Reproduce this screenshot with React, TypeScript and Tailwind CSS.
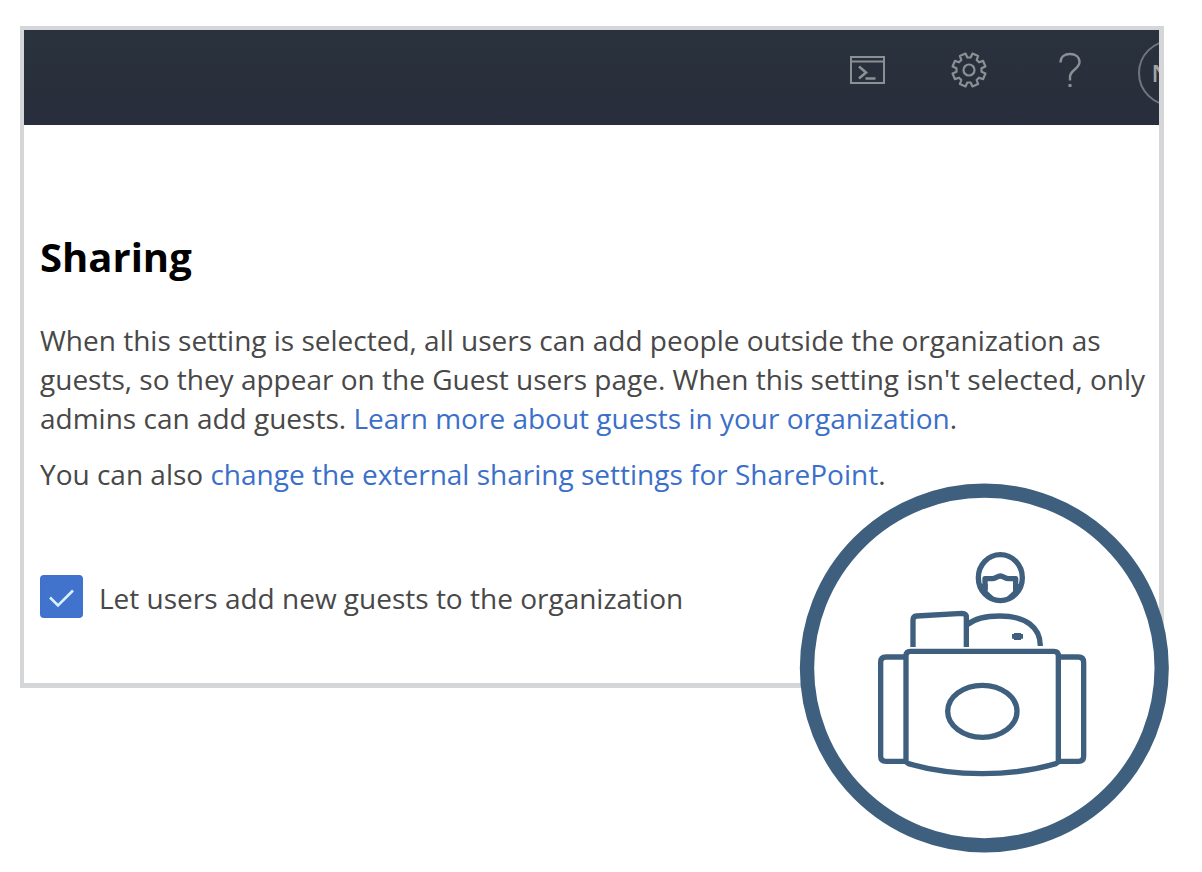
import { useState } from "react";

function TerminalIcon() {
  return (
    <svg viewBox="0 0 35 28" className="h-7 w-[35px]" fill="none" stroke="currentColor" strokeWidth="2" aria-hidden="true">
      <path d="M1 1h33v26H1zM1 5.500h33" />
      <path d="M9 10.500l7 6-7 6M15.500 22.500h10" strokeWidth="2.600" />
    </svg>
  );
}

function toothedOutline() {
  const points: string[] = [];
  const teeth = 8;
  for (let i = 0; i < teeth; i++) {
    const mid = (i / teeth) * 360 - 67.5;
    const corners: [number, number][] = [
      [-15, 12.6],
      [-10.5, 16.8],
      [10.5, 16.8],
      [15, 12.6],
    ];
    for (const [offset, radius] of corners) {
      const angle = ((mid + offset) * Math.PI) / 180;
      points.push(`${(18 + radius * Math.cos(angle)).toFixed(2)},${(18 + radius * Math.sin(angle)).toFixed(2)}`);
    }
  }
  return points.join(" ");
}

function GearIcon() {
  return (
    <svg viewBox="0 0 36 36" className="size-9" fill="none" stroke="currentColor" strokeWidth="2.200" strokeLinejoin="round" aria-hidden="true">
      <polygon points={toothedOutline()} />
      <circle cx="18" cy="18" r="5.500" />
    </svg>
  );
}

function HelpIcon() {
  return (
    <svg viewBox="0 0 22 36" className="h-9 w-[22px]" fill="none" stroke="currentColor" strokeWidth="2.400" aria-hidden="true">
      <path d="M1.500 10.500C1.500 5 5.500 2 11 2s9.500 3 9.500 8c0 7-9.500 8-9.500 15v3.500" />
      <path d="M11 32v3" strokeWidth="3" />
    </svg>
  );
}

function ReceptionBadge() {
  return (
    <svg viewBox="27 39 1110 1110" className="size-[370px]" fill="none" stroke="#3f5f7f" strokeWidth="16" aria-hidden="true">
      <circle cx="583" cy="594" r="532" fill="#fff" strokeWidth="43" />
      <ellipse cx="631" cy="323" rx="66" ry="69" />
      <path d="M585 360V326h22c9 0 15-8 24-8s15 8 24 8h22v34" strokeLinejoin="round" />
      <path d="M568 342h25v22l22 20-9 8-30-26zM694 342h-25v22l-22 20 9 8 30-26z" fill="#3f5f7f" stroke="none" />
      <path d="M369 531V450q0-11 11-12l136-8q13 0 13 12v89" />
      <path d="M532 464c22-18 54-26 97-26 76 0 122 32 122 90" />
      <path d="M672 489h21v3h6v14h-6v4h-21v-4h-6v-14h6z" fill="#3f5f7f" stroke="none" />
      <path d="M348 561h-60q-16 0-16 16v282q0 15 16 15h60M805 561h60q16 0 16 16v282q0 15-16 15h-60" />
      <path d="M348 557q0-13 13-13h431q13 0 13 13v315q0 6-7 9c-68 20-142 30-221 30s-153-10-222-30q-7-3-7-9z" />
      <ellipse cx="577" cy="724" rx="104" ry="78" />
    </svg>
  );
}

const linkClass = "text-[#3b6fc9] hover:underline";

export default function App() {
  const [allowGuests, setAllowGuests] = useState(true);
  const iconButton = "flex h-20 w-[101px] shrink-0 items-center justify-center";

  return (
    <div className="min-h-screen bg-white pt-[26px] pr-[38px] pb-5 pl-5 font-['Open_Sans','Noto_Sans',sans-serif]">
      <div className="relative">
        <main className="border-4 border-r-5 border-b-5 border-[#d5d6d7] bg-white pb-[65px]">
          <header className="h-[95px] overflow-hidden bg-linear-to-b from-[#29323d] to-[#282e3b]">
            <nav aria-label="Tools" className="-mr-[62px] flex justify-end text-[#8b9095]">
              <button type="button" aria-label="Cloud shell" className={iconButton}>
                <TerminalIcon />
              </button>
              <button type="button" aria-label="Settings" className={iconButton}>
                <GearIcon />
              </button>
              <button type="button" aria-label="Help" className={iconButton}>
                <HelpIcon />
              </button>
              <button type="button" aria-label="Account" className="flex h-[86px] w-[101px] shrink-0 items-center justify-center">
                <span className="flex size-[66px] items-center rounded-full border-2 border-[#70767e] pl-3 text-2xl font-semibold text-[#a5a39f]">
                  N
                </span>
              </button>
            </nav>
          </header>

          <section className="pr-2 pl-4 text-[28px] leading-[39px] text-[#484848]">
            <h1 className="pt-[107px] text-[40px] leading-[50px] font-bold text-black">Sharing</h1>
            <p className="mt-[39px]">
              When this setting is selected, all users can add people outside the organization as guests, so they appear
              on the Guest users page. When this setting isn't selected, only admins can add guests.{" "}
              <a href="#guests" className={linkClass}>Learn more about guests in your organization</a>.
            </p>
            <p className="mt-[17px]">
              You can also <a href="#sharepoint" className={linkClass}>change the external sharing settings for SharePoint</a>.
            </p>
            <label className="mt-[81px] flex items-end gap-4">
              <span className="relative flex">
                <input
                  type="checkbox"
                  checked={allowGuests}
                  onChange={(e) => setAllowGuests(e.target.checked)}
                  className="peer size-[43px] appearance-none rounded-sm border-2 border-[#3f72ce] bg-white checked:bg-[#4273cc]"
                />
                <svg viewBox="0 0 43 43" className="pointer-events-none absolute inset-0 hidden peer-checked:block" fill="none" stroke="#d9f0ff" strokeWidth="2.600" aria-hidden="true">
                  <path d="M10 22.500l8 8 15-15" />
                </svg>
              </span>
              Let users add new guests to the organization
            </label>
          </section>
        </main>

        <div className="pointer-events-none absolute -right-[5px] -bottom-[165px]">
          <ReceptionBadge />
        </div>
      </div>
    </div>
  );
}
